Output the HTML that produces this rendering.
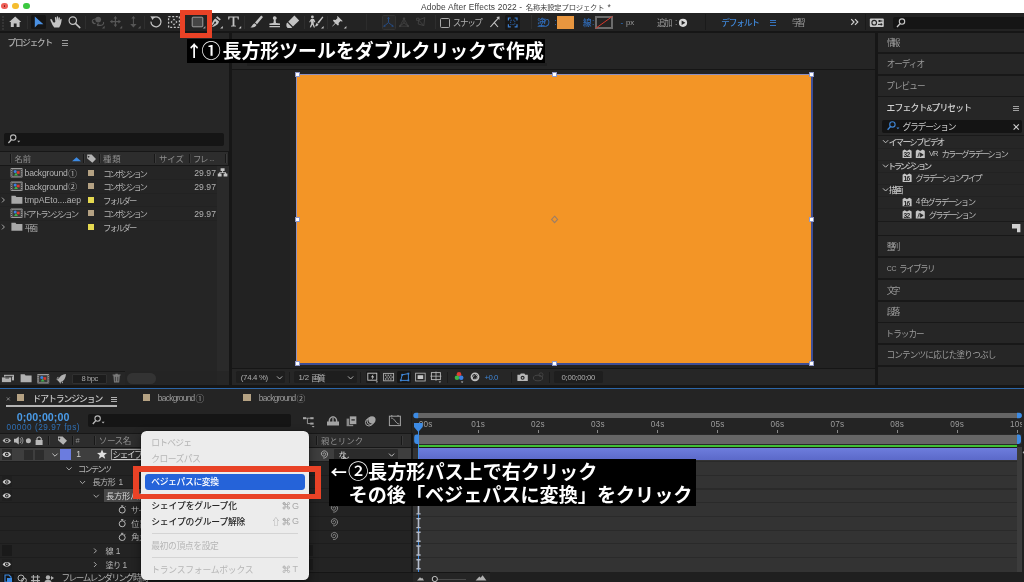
<!DOCTYPE html>
<html lang="ja"><head><meta charset="utf-8"><title>Adobe After Effects 2022</title>
<style>
html,body{margin:0;padding:0;background:#232323;}
body{width:1024px;height:582px;overflow:hidden;position:relative;font-family:"Liberation Sans",sans-serif;}
.app{position:absolute;left:0;top:0;width:1024px;height:582px;overflow:hidden;will-change:transform;}
.app>div,.app>span{position:absolute;display:block;box-sizing:border-box;white-space:nowrap;}
.ov{position:absolute;left:0;top:0;}
.ov text{font-family:"Liberation Sans","Noto Sans CJK JP",sans-serif;}
</style></head><body>
<div class="app">
<div style="left:0px;top:0px;width:1024px;height:13px;background:#ffffff;"></div>
<div style="left:1.2000000000000002px;top:2.6px;width:6.4px;height:6.4px;background:#ee5f57;border-radius:50%;"></div>
<div style="left:12.399999999999999px;top:2.6px;width:6.4px;height:6.4px;background:#f5bd2f;border-radius:50%;"></div>
<div style="left:23.2px;top:2.6px;width:6.4px;height:6.4px;background:#3bc840;border-radius:50%;"></div>
<div style="left:3.5px;top:4.9px;width:1.8px;height:1.8px;background:#7a1f18;border-radius:50%;"></div>
<span style="left:421px;top:2.6px;font-size:8.4px;line-height:8.4px;color:#3c3c3c;letter-spacing:0.139px;">Adobe After Effects 2022 -</span>
<span style="left:607.6px;top:2.5px;font-size:8.4px;line-height:8.4px;color:#3c3c3c;">*</span>
<div style="left:0px;top:13px;width:1024px;height:18px;background:#232323;"></div>
<div style="left:0px;top:31px;width:1024px;height:2px;background:#161616;"></div>
<div style="left:1.5px;top:16px;width:2px;height:1.6px;background:#343434;"></div>
<div style="left:1.5px;top:19px;width:2px;height:1.6px;background:#343434;"></div>
<div style="left:1.5px;top:22px;width:2px;height:1.6px;background:#343434;"></div>
<div style="left:1.5px;top:25px;width:2px;height:1.6px;background:#343434;"></div>
<div style="left:1.5px;top:28px;width:2px;height:1.6px;background:#343434;"></div>
<div style="left:26.5px;top:16px;width:1px;height:13px;background:#2e2e2e;"></div>
<div style="left:30.5px;top:14.5px;width:15.5px;height:14.5px;background:#151515;border-radius:1.5px;"></div>
<div style="left:85px;top:16px;width:1px;height:13px;background:#2e2e2e;"></div>
<div style="left:144px;top:16px;width:1px;height:13px;background:#2e2e2e;"></div>
<div style="left:244px;top:16px;width:1px;height:13px;background:#2e2e2e;"></div>
<div style="left:303.5px;top:16px;width:1px;height:13px;background:#2e2e2e;"></div>
<div style="left:327px;top:16px;width:1px;height:13px;background:#2e2e2e;"></div>
<div style="left:365.5px;top:14px;width:1px;height:16px;background:#2c2c2c;"></div>
<div style="left:381.5px;top:15.3px;width:14.2px;height:14.5px;background:#292929;border:1px solid #333;border-radius:1.5px;"></div>
<div style="left:435px;top:15px;width:1px;height:14px;background:#2e2e2e;"></div>
<div style="left:440.4px;top:17.6px;width:10px;height:10px;background:transparent;border:1.2px solid #a8a8a8;border-radius:1.5px;"></div>
<div style="left:505.3px;top:15px;width:15px;height:14.7px;background:#171717;border-radius:1.5px;"></div>
<div style="left:530.5px;top:15px;width:1px;height:14px;background:#2e2e2e;"></div>
<span style="left:554.2px;top:17.6px;font-size:8.4px;line-height:8.4px;color:#2f6cba;">:</span>
<div style="left:557px;top:16px;width:17px;height:12.8px;background:#e8963f;"></div>
<span style="left:592px;top:17.6px;font-size:8.4px;line-height:8.4px;color:#2f6cba;">:</span>
<div style="left:595px;top:16px;width:18px;height:12.8px;background:#232323;border:2px solid #6c6c6c;"></div>
<span style="left:620.6px;top:18.6px;font-size:8.4px;line-height:8.4px;color:#2f6cba;">-</span>
<span style="left:626px;top:19px;font-size:7.8px;line-height:7.8px;color:#9a9a9a;">px</span>
<span style="left:675px;top:17.6px;font-size:8.4px;line-height:8.4px;color:#9a9a9a;">:</span>
<div style="left:704.5px;top:14px;width:1px;height:16px;background:#1a1a1a;"></div>
<div style="left:770px;top:20px;width:6.4px;height:1.1px;background:#3673bd;"></div>
<div style="left:770px;top:22.4px;width:6.4px;height:1.1px;background:#3673bd;"></div>
<div style="left:770px;top:24.8px;width:6.4px;height:1.1px;background:#3673bd;"></div>
<div style="left:865px;top:14px;width:1px;height:16px;background:#1a1a1a;"></div>
<div style="left:893.3px;top:17px;width:131px;height:12.4px;background:#151515;border-radius:2px 0 0 2px;"></div>
<div style="left:0px;top:33px;width:229px;height:352px;background:#262626;"></div>
<div style="left:229px;top:33px;width:3px;height:352px;background:#161616;"></div>
<div style="left:62.2px;top:40.4px;width:6px;height:1px;background:#9a9a9a;"></div>
<div style="left:62.2px;top:42.6px;width:6px;height:1px;background:#9a9a9a;"></div>
<div style="left:62.2px;top:44.8px;width:6px;height:1px;background:#9a9a9a;"></div>
<div style="left:4px;top:133px;width:220px;height:13.2px;background:#151515;border-radius:2px;"></div>
<div style="left:0px;top:151px;width:229px;height:15px;background:#171717;"></div>
<div style="left:0px;top:152.4px;width:228px;height:12.4px;background:#2d2d2d;"></div>
<div style="left:10px;top:154px;width:1px;height:9.4px;background:#181818;"></div>
<div style="left:11px;top:154px;width:0.6px;height:9.4px;background:#3a3a3a;"></div>
<div style="left:83.4px;top:154px;width:1px;height:9.4px;background:#181818;"></div>
<div style="left:84.4px;top:154px;width:0.6px;height:9.4px;background:#3a3a3a;"></div>
<div style="left:99.3px;top:154px;width:1px;height:9.4px;background:#181818;"></div>
<div style="left:100.3px;top:154px;width:0.6px;height:9.4px;background:#3a3a3a;"></div>
<div style="left:154.2px;top:154px;width:1px;height:9.4px;background:#181818;"></div>
<div style="left:155.2px;top:154px;width:0.6px;height:9.4px;background:#3a3a3a;"></div>
<div style="left:189.2px;top:154px;width:1px;height:9.4px;background:#181818;"></div>
<div style="left:190.2px;top:154px;width:0.6px;height:9.4px;background:#3a3a3a;"></div>
<div style="left:225.4px;top:154px;width:1px;height:9.4px;background:#181818;"></div>
<div style="left:226.4px;top:154px;width:0.6px;height:9.4px;background:#3a3a3a;"></div>
<span style="left:209.4px;top:154.6px;font-size:7px;line-height:7px;color:#8e8e8e;letter-spacing:-0.4px;">...</span>
<div style="left:0px;top:166px;width:217px;height:205px;background:#252525;"></div>
<div style="left:217px;top:166px;width:12px;height:205px;background:#2a2a2a;"></div>
<span style="left:24.6px;top:169.2px;font-size:8.6px;line-height:8.6px;color:#b2b2b2;letter-spacing:-0.194px;">background</span>
<div style="left:88px;top:169.6px;width:6.4px;height:6.3px;background:#b5a283;"></div>
<span style="left:194.2px;top:169.2px;font-size:8.6px;line-height:8.6px;color:#b2b2b2;letter-spacing:0.070px;">29.97</span>
<div style="left:0px;top:179.0px;width:217px;height:1px;background:#222222;"></div>
<span style="left:24.6px;top:182.7px;font-size:8.6px;line-height:8.6px;color:#b2b2b2;letter-spacing:-0.194px;">background</span>
<div style="left:88px;top:183.1px;width:6.4px;height:6.3px;background:#b5a283;"></div>
<span style="left:194.2px;top:182.7px;font-size:8.6px;line-height:8.6px;color:#b2b2b2;letter-spacing:0.070px;">29.97</span>
<div style="left:0px;top:192.5px;width:217px;height:1px;background:#222222;"></div>
<span style="left:24.6px;top:196.2px;font-size:8.6px;line-height:8.6px;color:#b2b2b2;letter-spacing:-0.022px;">tmpAEto....aep</span>
<div style="left:88px;top:196.6px;width:6.4px;height:6.3px;background:#e5d950;"></div>
<div style="left:0px;top:206.0px;width:217px;height:1px;background:#222222;"></div>
<div style="left:88px;top:210.1px;width:6.4px;height:6.3px;background:#b5a283;"></div>
<span style="left:194.2px;top:209.7px;font-size:8.6px;line-height:8.6px;color:#b2b2b2;letter-spacing:0.070px;">29.97</span>
<div style="left:0px;top:219.5px;width:217px;height:1px;background:#222222;"></div>
<div style="left:88px;top:223.6px;width:6.4px;height:6.3px;background:#e5d950;"></div>
<div style="left:0px;top:371.4px;width:125px;height:1px;background:#181818;"></div>
<div style="left:0px;top:372.4px;width:229px;height:13px;background:#262626;"></div>
<div style="left:125px;top:371px;width:92px;height:14px;background:#242424;"></div>
<div style="left:72px;top:373.6px;width:35px;height:10.6px;background:#1c1c1c;border:1px solid #303030;border-radius:1px;"></div>
<span style="left:81.6px;top:375.4px;font-size:7.6px;line-height:7.6px;color:#a8a8a8;letter-spacing:-0.498px;">8 bpc</span>
<div style="left:126.6px;top:373px;width:29px;height:10.6px;background:#333333;border-radius:5.3px;"></div>
<div style="left:232px;top:33px;width:643px;height:36px;background:#252525;"></div>
<div style="left:246.6px;top:63px;width:300px;height:3.4px;background:#1f1f1f;"></div>
<div style="left:232px;top:68.6px;width:643px;height:1.4px;background:#151515;"></div>
<div style="left:232px;top:70px;width:643px;height:298px;background:#222222;"></div>
<div style="left:232px;top:367.6px;width:643px;height:1.4px;background:#161616;"></div>
<div style="left:232px;top:369px;width:643px;height:16px;background:#262626;"></div>
<div style="left:875px;top:33px;width:3px;height:352px;background:#161616;"></div>
<div style="left:296.4px;top:74.2px;width:516.6px;height:291px;background:#8d90c2;"></div>
<div style="left:298px;top:76px;width:515px;height:289.2px;background:#3f4e96;"></div>
<div style="left:297.2px;top:75px;width:513.8px;height:288.2px;background:#f39526;"></div>
<div style="left:294.79999999999995px;top:72.0px;width:5.2px;height:5.2px;background:#ffffff;border:0.8px solid #8f98c8;"></div>
<div style="left:294.79999999999995px;top:216.6px;width:5.2px;height:5.2px;background:#ffffff;border:0.8px solid #8f98c8;"></div>
<div style="left:294.79999999999995px;top:361.2px;width:5.2px;height:5.2px;background:#ffffff;border:0.8px solid #8f98c8;"></div>
<div style="left:552.0px;top:72.0px;width:5.2px;height:5.2px;background:#ffffff;border:0.8px solid #8f98c8;"></div>
<div style="left:552.0px;top:361.2px;width:5.2px;height:5.2px;background:#ffffff;border:0.8px solid #8f98c8;"></div>
<div style="left:809.0px;top:72.0px;width:5.2px;height:5.2px;background:#ffffff;border:0.8px solid #8f98c8;"></div>
<div style="left:809.0px;top:216.6px;width:5.2px;height:5.2px;background:#ffffff;border:0.8px solid #8f98c8;"></div>
<div style="left:809.0px;top:361.2px;width:5.2px;height:5.2px;background:#ffffff;border:0.8px solid #8f98c8;"></div>
<div style="left:236px;top:371.4px;width:49.4px;height:11.8px;background:#1e1e1e;border-radius:1.5px;"></div>
<span style="left:240.8px;top:373.6px;font-size:7.8px;line-height:7.8px;color:#b0b0b0;letter-spacing:-0.297px;">(74.4 %)</span>
<div style="left:289.4px;top:371.6px;width:1px;height:11.399999999999977px;background:#1b1b1b;"></div>
<div style="left:294px;top:371.4px;width:63px;height:11.8px;background:#1e1e1e;border-radius:1.5px;"></div>
<span style="left:298.4px;top:373.6px;font-size:7.8px;line-height:7.8px;color:#b0b0b0;letter-spacing:-0.122px;">1/2</span>
<div style="left:360.4px;top:371.6px;width:1px;height:11.399999999999977px;background:#1b1b1b;"></div>
<div style="left:365.6px;top:371.2px;width:14px;height:12px;background:#1a1a1a;border-radius:1.5px;"></div>
<div style="left:397px;top:371.2px;width:14.4px;height:12px;background:#161616;border-radius:1.5px;"></div>
<div style="left:447.2px;top:371.6px;width:1px;height:11.399999999999977px;background:#1b1b1b;"></div>
<span style="left:484.6px;top:373.6px;font-size:7.8px;line-height:7.8px;color:#3f86d6;letter-spacing:-0.533px;">+0.0</span>
<div style="left:510.6px;top:371.6px;width:1px;height:11.399999999999977px;background:#1b1b1b;"></div>
<div style="left:549.2px;top:371.6px;width:1px;height:11.399999999999977px;background:#1b1b1b;"></div>
<div style="left:553.8px;top:371.4px;width:49.4px;height:11.8px;background:#1e1e1e;border-radius:1.5px;"></div>
<span style="left:561.6px;top:373.6px;font-size:7.8px;line-height:7.8px;color:#b0b0b0;letter-spacing:-0.341px;">0;00;00;00</span>
<div style="left:878px;top:33px;width:146px;height:352px;background:#262626;"></div>
<div style="left:878px;top:52.4px;width:146px;height:1.6px;background:#181818;"></div>
<div style="left:878px;top:74px;width:146px;height:1.6px;background:#181818;"></div>
<div style="left:878px;top:95.8px;width:146px;height:1.6px;background:#181818;"></div>
<div style="left:1012.8px;top:105.6px;width:5.8px;height:1px;background:#a0a0a0;"></div>
<div style="left:1012.8px;top:107.8px;width:5.8px;height:1px;background:#a0a0a0;"></div>
<div style="left:1012.8px;top:110px;width:5.8px;height:1px;background:#a0a0a0;"></div>
<div style="left:882px;top:120.2px;width:139.6px;height:12.4px;background:#141414;border-radius:2px;"></div>
<div style="left:878px;top:134.6px;width:146px;height:1.2px;background:#1a1a1a;"></div>
<span style="left:929.0000000000001px;top:150.0px;font-size:7.6px;line-height:7.6px;color:#bdbdbd;letter-spacing:-0.958px;">VR</span>
<span style="left:915.8000000000001px;top:198.2px;font-size:8.2px;line-height:8.2px;color:#bdbdbd;letter-spacing:0.000px;">4</span>
<div style="left:878px;top:147.6px;width:146px;height:0.8px;background:#222222;"></div>
<div style="left:878px;top:159.8px;width:146px;height:0.8px;background:#222222;"></div>
<div style="left:878px;top:171.8px;width:146px;height:0.8px;background:#222222;"></div>
<div style="left:878px;top:183.8px;width:146px;height:0.8px;background:#222222;"></div>
<div style="left:878px;top:195.8px;width:146px;height:0.8px;background:#222222;"></div>
<div style="left:878px;top:208px;width:146px;height:0.8px;background:#222222;"></div>
<div style="left:878px;top:220.6px;width:146px;height:1px;background:#1a1a1a;"></div>
<div style="left:878px;top:221.6px;width:146px;height:13px;background:#272727;"></div>
<div style="left:878px;top:234.6px;width:146px;height:1.6px;background:#181818;"></div>
<div style="left:878px;top:256.4px;width:146px;height:1.6px;background:#181818;"></div>
<div style="left:878px;top:278.2px;width:146px;height:1.6px;background:#181818;"></div>
<div style="left:878px;top:300px;width:146px;height:1.6px;background:#181818;"></div>
<div style="left:878px;top:321.8px;width:146px;height:1.6px;background:#181818;"></div>
<div style="left:878px;top:343.4px;width:146px;height:1.6px;background:#181818;"></div>
<div style="left:878px;top:365.2px;width:146px;height:1.6px;background:#181818;"></div>
<span style="left:886.8px;top:265.3px;font-size:7px;line-height:7px;color:#9c9c9c;letter-spacing:-0.310px;">CC</span>
<div style="left:0px;top:385px;width:1024px;height:4px;background:#161616;"></div>
<div style="left:0px;top:388px;width:1024px;height:1.2px;background:#2c66a8;"></div>
<div style="left:0px;top:389.2px;width:1024px;height:193px;background:#242424;"></div>
<div style="left:17px;top:394.2px;width:7.4px;height:7px;background:#b5a283;"></div>
<div style="left:111.4px;top:396.6px;width:6px;height:1px;background:#b0b0b0;"></div>
<div style="left:111.4px;top:398.8px;width:6px;height:1px;background:#b0b0b0;"></div>
<div style="left:111.4px;top:401px;width:6px;height:1px;background:#b0b0b0;"></div>
<div style="left:6.2px;top:405.2px;width:110.6px;height:1.6px;background:#b4b4b4;"></div>
<div style="left:142.6px;top:394.2px;width:7.4px;height:7px;background:#b5a283;"></div>
<span style="left:157.8px;top:394.4px;font-size:8.4px;line-height:8.4px;color:#9a9a9a;letter-spacing:-0.700px;">background</span>
<div style="left:243.4px;top:394.2px;width:7.4px;height:7px;background:#b5a283;"></div>
<span style="left:258.8px;top:394.4px;font-size:8.4px;line-height:8.4px;color:#9a9a9a;letter-spacing:-0.700px;">background</span>
<span style="left:16.8px;top:411.5px;font-size:10.7px;line-height:10.7px;color:#4a9be8;font-weight:700;letter-spacing:0.028px;">0;00;00;00</span>
<span style="left:6.6px;top:424.4px;font-size:8.2px;line-height:8.2px;color:#2f70b5;letter-spacing:0.545px;">00000 (29.97 fps)</span>
<div style="left:88.2px;top:414px;width:203px;height:13px;background:#151515;border-radius:2px;"></div>
<div style="left:0px;top:433px;width:411px;height:1px;background:#171717;"></div>
<div style="left:0px;top:434px;width:411px;height:12.6px;background:#2d2d2d;"></div>
<div style="left:0px;top:446.6px;width:411px;height:1.2px;background:#171717;"></div>
<div style="left:47.6px;top:436px;width:1px;height:9px;background:#181818;"></div>
<div style="left:48.6px;top:436px;width:0.6px;height:9px;background:#3a3a3a;"></div>
<div style="left:71.6px;top:436px;width:1px;height:9px;background:#181818;"></div>
<div style="left:72.6px;top:436px;width:0.6px;height:9px;background:#3a3a3a;"></div>
<div style="left:94.2px;top:436px;width:1px;height:9px;background:#181818;"></div>
<div style="left:95.2px;top:436px;width:0.6px;height:9px;background:#3a3a3a;"></div>
<div style="left:316.2px;top:436px;width:1px;height:9px;background:#181818;"></div>
<div style="left:317.2px;top:436px;width:0.6px;height:9px;background:#3a3a3a;"></div>
<div style="left:400.8px;top:436px;width:1px;height:9px;background:#181818;"></div>
<div style="left:401.8px;top:436px;width:0.6px;height:9px;background:#3a3a3a;"></div>
<span style="left:75.6px;top:436.8px;font-size:7.6px;line-height:7.6px;color:#8e8e8e;">#</span>
<div style="left:0px;top:447.8px;width:411px;height:13.2px;background:#3e3e3e;"></div>
<div style="left:0px;top:461.52000000000004px;width:411px;height:13.72px;background:#232323;"></div>
<div style="left:0px;top:461.02000000000004px;width:411px;height:1px;background:#1d1d1d;"></div>
<div style="left:0px;top:475.24px;width:411px;height:13.72px;background:#232323;"></div>
<div style="left:0px;top:474.74px;width:411px;height:1px;background:#1d1d1d;"></div>
<div style="left:0px;top:488.96000000000004px;width:411px;height:13.72px;background:#232323;"></div>
<div style="left:0px;top:488.46000000000004px;width:411px;height:1px;background:#1d1d1d;"></div>
<div style="left:0px;top:502.68px;width:411px;height:13.72px;background:#232323;"></div>
<div style="left:0px;top:502.18px;width:411px;height:1px;background:#1d1d1d;"></div>
<div style="left:0px;top:516.4px;width:411px;height:13.72px;background:#232323;"></div>
<div style="left:0px;top:515.9px;width:411px;height:1px;background:#1d1d1d;"></div>
<div style="left:0px;top:530.12px;width:411px;height:13.72px;background:#232323;"></div>
<div style="left:0px;top:529.62px;width:411px;height:1px;background:#1d1d1d;"></div>
<div style="left:0px;top:543.84px;width:411px;height:13.72px;background:#232323;"></div>
<div style="left:0px;top:543.34px;width:411px;height:1px;background:#1d1d1d;"></div>
<div style="left:0px;top:557.5600000000001px;width:411px;height:13.72px;background:#232323;"></div>
<div style="left:0px;top:557.0600000000001px;width:411px;height:1px;background:#1d1d1d;"></div>
<div style="left:0px;top:447.8px;width:411px;height:13.2px;background:#3e3e3e;"></div>
<div style="left:2px;top:449px;width:9.6px;height:11px;background:#2c2c2c;"></div>
<div style="left:24px;top:449.6px;width:9px;height:10px;background:#2c2c2c;"></div>
<div style="left:34.6px;top:449.6px;width:9px;height:10px;background:#2c2c2c;"></div>
<div style="left:60.4px;top:449.4px;width:10.4px;height:10.4px;background:#6b7cdf;"></div>
<span style="left:76.2px;top:450.4px;font-size:8.6px;line-height:8.6px;color:#d0d0d0;">1</span>
<div style="left:110.6px;top:449px;width:40px;height:11px;background:#2a2a2a;border:1px solid #9a9a9a;"></div>
<div style="left:112.6px;top:459px;width:38px;height:0.8px;background:#c8c8c8;"></div>
<div style="left:2px;top:476.44px;width:9.6px;height:11px;background:#1f1f1f;"></div>
<span style="left:118.6px;top:478.24px;font-size:8.4px;line-height:8.4px;color:#b4b4b4;">1</span>
<div style="left:2px;top:490.16px;width:9.6px;height:11px;background:#1f1f1f;"></div>
<div style="left:104.2px;top:489.36px;width:60px;height:12.6px;background:#484848;"></div>
<div style="left:2px;top:545.0400000000001px;width:9.6px;height:11px;background:#1a1a1a;"></div>
<span style="left:115.8px;top:546.84px;font-size:8.4px;line-height:8.4px;color:#b4b4b4;">1</span>
<div style="left:2px;top:558.7600000000001px;width:9.6px;height:11px;background:#1f1f1f;"></div>
<span style="left:122.6px;top:560.5600000000001px;font-size:8.4px;line-height:8.4px;color:#b4b4b4;">1</span>
<div style="left:333.6px;top:448.8px;width:64.6px;height:11.6px;background:#2b2b2b;border-radius:1px;"></div>
<div style="left:308.6px;top:544.84px;width:4.6px;height:11.4px;background:#1b1b1b;"></div>
<div style="left:308.6px;top:558.5600000000001px;width:4.6px;height:11.4px;background:#1b1b1b;"></div>
<div style="left:410.6px;top:433px;width:2px;height:139px;background:#171717;"></div>
<div style="left:411.4px;top:411px;width:1px;height:22px;background:#1d1d1d;"></div>
<div style="left:412.6px;top:411px;width:611.4px;height:23.4px;background:#242424;"></div>
<div style="left:418.2px;top:412.8px;width:598.8px;height:5.4px;background:#656565;"></div>
<div style="left:417.8px;top:430.4px;width:1px;height:2.8px;background:#8a8a8a;"></div>
<span style="left:418.7px;top:420.6px;font-size:8.2px;line-height:8.2px;color:#9c9c9c;letter-spacing:0.190px;">00s</span>
<div style="left:477.68px;top:430.4px;width:1px;height:2.8px;background:#8a8a8a;"></div>
<span style="left:471.18px;top:420.6px;font-size:8.2px;line-height:8.2px;color:#9c9c9c;letter-spacing:0.190px;">01s</span>
<div style="left:537.5600000000001px;top:430.4px;width:1px;height:2.8px;background:#8a8a8a;"></div>
<span style="left:531.0600000000001px;top:420.6px;font-size:8.2px;line-height:8.2px;color:#9c9c9c;letter-spacing:0.190px;">02s</span>
<div style="left:597.44px;top:430.4px;width:1px;height:2.8px;background:#8a8a8a;"></div>
<span style="left:590.94px;top:420.6px;font-size:8.2px;line-height:8.2px;color:#9c9c9c;letter-spacing:0.190px;">03s</span>
<div style="left:657.32px;top:430.4px;width:1px;height:2.8px;background:#8a8a8a;"></div>
<span style="left:650.82px;top:420.6px;font-size:8.2px;line-height:8.2px;color:#9c9c9c;letter-spacing:0.190px;">04s</span>
<div style="left:717.2px;top:430.4px;width:1px;height:2.8px;background:#8a8a8a;"></div>
<span style="left:710.7px;top:420.6px;font-size:8.2px;line-height:8.2px;color:#9c9c9c;letter-spacing:0.190px;">05s</span>
<div style="left:777.08px;top:430.4px;width:1px;height:2.8px;background:#8a8a8a;"></div>
<span style="left:770.58px;top:420.6px;font-size:8.2px;line-height:8.2px;color:#9c9c9c;letter-spacing:0.190px;">06s</span>
<div style="left:836.96px;top:430.4px;width:1px;height:2.8px;background:#8a8a8a;"></div>
<span style="left:830.46px;top:420.6px;font-size:8.2px;line-height:8.2px;color:#9c9c9c;letter-spacing:0.190px;">07s</span>
<div style="left:896.84px;top:430.4px;width:1px;height:2.8px;background:#8a8a8a;"></div>
<span style="left:890.34px;top:420.6px;font-size:8.2px;line-height:8.2px;color:#9c9c9c;letter-spacing:0.190px;">08s</span>
<div style="left:956.72px;top:430.4px;width:1px;height:2.8px;background:#8a8a8a;"></div>
<span style="left:950.22px;top:420.6px;font-size:8.2px;line-height:8.2px;color:#9c9c9c;letter-spacing:0.190px;">09s</span>
<div style="left:1016.6000000000001px;top:430.4px;width:1px;height:2.8px;background:#8a8a8a;"></div>
<span style="left:1010.1000000000001px;top:420.6px;font-size:8.2px;line-height:8.2px;color:#9c9c9c;letter-spacing:0.190px;">10s</span>
<div style="left:412.6px;top:433.6px;width:611.4px;height:0.8px;background:#1c1c1c;"></div>
<div style="left:412.6px;top:434.4px;width:611.4px;height:10px;background:#2a2a2a;"></div>
<div style="left:418.2px;top:434.6px;width:598.8px;height:9.6px;background:#666666;"></div>
<div style="left:418.2px;top:444.2px;width:598.8px;height:0.6px;background:#2a2a2a;"></div>
<div style="left:418.2px;top:444.8px;width:598.8px;height:2.3px;background:#3fc035;"></div>
<div style="left:412.6px;top:447.4px;width:611.4px;height:1px;background:#1c1c1c;"></div>
<div style="left:412.6px;top:448.4px;width:604.4px;height:123.4px;background:#333333;"></div>
<div style="left:412.6px;top:460.92px;width:604.4px;height:1.2px;background:#2a2a2a;"></div>
<div style="left:412.6px;top:474.64px;width:604.4px;height:1.2px;background:#2a2a2a;"></div>
<div style="left:412.6px;top:488.36px;width:604.4px;height:1.2px;background:#2a2a2a;"></div>
<div style="left:412.6px;top:502.08px;width:604.4px;height:1.2px;background:#2a2a2a;"></div>
<div style="left:412.6px;top:515.8px;width:604.4px;height:1.2px;background:#2a2a2a;"></div>
<div style="left:412.6px;top:529.52px;width:604.4px;height:1.2px;background:#2a2a2a;"></div>
<div style="left:412.6px;top:543.24px;width:604.4px;height:1.2px;background:#2a2a2a;"></div>
<div style="left:412.6px;top:556.96px;width:604.4px;height:1.2px;background:#2a2a2a;"></div>
<div style="left:418.2px;top:448.4px;width:598.8px;height:12px;background:#6472d4;background:linear-gradient(#6d7ddd,#5b69c9);"></div>
<div style="left:1017px;top:447.4px;width:5px;height:124.4px;background:#3c3c3c;"></div>
<div style="left:1021.8px;top:411px;width:2.2px;height:23px;background:#242424;"></div>
<div style="left:1022px;top:434px;width:2px;height:138px;background:#202020;"></div>
<div style="left:418px;top:431px;width:1px;height:141px;background:#3d8be4;"></div>
<div style="left:0px;top:571.8px;width:1024px;height:10.2px;background:#1f1f1f;"></div>
<div style="left:412.6px;top:572px;width:77.6px;height:10px;background:#252525;"></div>
<div style="left:0px;top:571.6px;width:490px;height:1.2px;background:#151515;"></div>
<div style="left:2.6px;top:573.6px;width:11px;height:9px;background:#151515;"></div>
<div style="left:437.6px;top:578.6px;width:28.4px;height:0.8px;background:#4a4a4a;"></div>
</div>
<svg class="ov" width="1024" height="582" viewBox="0 0 1024 582">
<text x="525.8" y="9.6" font-size="7.4" fill="#404040" textLength="78.8">名称未設定プロジェクト</text>
<path d="M15.2 16.6L9.2 22L10.8 22L10.8 27L13.8 27L13.8 23.6L16.6 23.6L16.6 27L19.6 27L19.6 22L21.2 22Z" fill="#c4c4c4"/>
<path d="M34.8 16.4L34.8 27.6L38 24.2L43.4 24.2Z" fill="#4a90e2"/>
<path d="M52.6 21.2C52.2 19.6 51.6 18.8 50.6 19C50 19.4 50.6 21 51.4 22.6C52.2 24.6 53 26.2 54.2 27.4L59.2 27.4C60.4 25.8 61 24 61.4 21.6C61.7 20 61.8 19 61.2 18.8C60.5 18.7 60.2 19.6 59.9 21L59.9 17.8C59.9 16.9 58.7 16.9 58.6 17.8L58.4 20.6L58.1 16.9C58 16 56.8 16 56.8 16.9L56.8 20.6L56.2 17.5C56 16.6 54.8 16.8 54.9 17.7L55.3 21.6C55.2 22.6 54.2 22.8 53.6 22.4Z" fill="#c4c4c4"/>
<circle cx="72.8" cy="20.6" r="3.7" fill="none" stroke="#c4c4c4" stroke-width="1.2"/><path d="M75.4 23.4L79.8 27.6" stroke="#c4c4c4" stroke-width="1.5" stroke-linecap="round"/>
<circle cx="98.2" cy="19.6" r="2.9" fill="#565656"/><path d="M96 19C92 18.6 91.2 21.6 93.6 23.6M93.6 23.6L93.4 21.6M93.6 23.6L95.6 23.4M97 24.6C101 26.4 104.6 24.8 103.4 22M97 24.6L98.6 23.4M97 24.6L98.4 26" fill="none" stroke="#565656" stroke-width="1.1"/>
<path d="M104.6 28.4L104.6 25.799999999999997L102.0 28.4Z" fill="#565656"/>
<path d="M115.4 16L117.2 18.6L116 18.6L116 21L118.4 21L118.4 19.8L121 21.6L118.4 23.4L118.4 22.2L116 22.2L116 24.6L117.2 24.6L115.4 27.2L113.6 24.6L114.8 24.6L114.8 22.2L112.4 22.2L112.4 23.4L109.8 21.6L112.4 19.8L112.4 21L114.8 21L114.8 18.6L113.6 18.6Z" fill="#565656"/>
<path d="M122.2 28.4L122.2 25.799999999999997L119.60000000000001 28.4Z" fill="#565656"/>
<path d="M133.4 16L135.4 18.6L133.9 18.6L133.9 24L136.6 24L133.4 27.4L130.2 24L132.9 24L132.9 18.6L131.4 18.6Z" fill="#565656"/>
<path d="M140.6 28.4L140.6 25.799999999999997L138.0 28.4Z" fill="#565656"/>
<path d="M153.4 17.6A5 5 0 1 1 151 21.6" fill="none" stroke="#c4c4c4" stroke-width="1.3"/><path d="M150.4 16.2L154.8 16.6L152.6 20Z" fill="#c4c4c4"/>
<rect x="168.6" y="16.6" width="10.8" height="10.8" fill="none" stroke="#c4c4c4" stroke-width="1.3" stroke-dasharray="2 1.6"/><path d="M174 18.4L175.4 20.2L172.6 20.2ZM174 25.6L175.4 23.8L172.6 23.8ZM170.4 22L172.2 20.6L172.2 23.4ZM177.6 22L175.8 20.6L175.8 23.4Z" fill="#c4c4c4"/>
<rect x="192.2" y="17.2" width="10.6" height="9.6" rx="0.8" fill="#454545" stroke="#a8a8a8" stroke-width="0.9"/>
<path d="M205.4 28.6L205.4 26.0L202.8 28.6Z" fill="#9a9a9a"/>
<path d="M217.2 16.2L220.8 19.2L219.6 20.6L216 17.6ZM215.4 18.4L219 21.4C218.6 23.6 217.4 25.2 212.4 27L212.2 26.6L215 23.6A1 1 0 1 0 214.2 22.9L211.6 26L211.4 25.8C212.4 21.4 213.6 19.6 215.4 18.4Z" fill="#c4c4c4"/>
<path d="M222.8 28.6L222.8 26.0L220.20000000000002 28.6Z" fill="#c4c4c4"/>
<path d="M228.2 16.4L238.8 16.4L238.8 19.4L237.8 19.4L237.4 17.6L234.4 17.6L234.4 25.4L236 25.8L236 26.6L231 26.6L231 25.8L232.6 25.4L232.6 17.6L229.6 17.6L229.2 19.4L228.2 19.4Z" fill="#c4c4c4"/>
<path d="M241.2 28.6L241.2 26.0L238.6 28.6Z" fill="#c4c4c4"/>
<path d="M261.2 15.6L263 17L257 24.2L255 22.6ZM254.4 23.2L256.4 24.8C256 27.2 253.2 27.8 250.4 27.2C252.4 26.4 252.2 24.2 254.4 23.2Z" fill="#c4c4c4"/>
<path d="M274.8 16.2A1.9 1.9 0 0 1 275.6 19.8L276 23L280 23.4L280 25L269.4 25L269.4 23.4L273.4 23L273.9 19.8A1.9 1.9 0 0 1 274.8 16.2ZM269.4 26L280 26L280 27.2L269.4 27.2Z" fill="#c4c4c4"/>
<path d="M294.4 15.6L299.2 20.4L293 26.6L288.2 21.8ZM287.4 22.6L292.2 27.4L291.2 28L287.6 28L286.4 26.2L286.4 23.8Z" fill="#c4c4c4"/>
<circle cx="312.4" cy="17" r="1.4" fill="#c4c4c4"/><path d="M311 19L314 19L315.4 22L314.6 22.6L313.6 21L313.8 24L315 27.4L313.8 27.6L312.4 24.6L311 27.6L309.8 27.2L311.2 23.6L311 21L310 22.6L309.2 22Z" fill="#c4c4c4"/><path d="M322.4 16.4L323.4 17.2L318.8 23.4L317.4 22.4ZM316.8 23L318.4 24.2C318 26 316.4 26.4 314.8 26.2C316 25.6 315.6 23.8 316.8 23Z" fill="#c4c4c4"/>
<path d="M323.6 28.6L323.6 26.0L321.0 28.6Z" fill="#c4c4c4"/>
<path d="M337.6 16L342.8 21.2L341.6 21.6L340.6 21L338.6 23L338.8 25L337.8 25.6L335.6 23.4L332.6 26.6L332.2 26.2L335 23L333 20.8L333.6 19.8L335.6 20L337.6 18L337 17Z" fill="#c4c4c4"/>
<path d="M346.4 28.6L346.4 26.0L343.79999999999995 28.6Z" fill="#c4c4c4"/>
<path d="M388.5 22.6L388.5 18.200000000000003M388.5 22.6L384.3 26.0M388.5 22.6L392.7 26.0" stroke="#264c84" stroke-width="1" fill="none"/><path d="M388.5 16.8L390.0 18.8L387.0 18.8ZM383.3 27.0L385.7 26.400000000000002L384.1 24.6ZM393.7 27.0L391.3 26.400000000000002L392.9 24.6Z" fill="#264c84"/>
<path d="M404 22.8L404 18.4M404 22.8L399.8 26.2M404 22.8L408.2 26.2" stroke="#434343" stroke-width="1" fill="none"/><path d="M404 17.0L405.5 19.0L402.5 19.0ZM398.8 27.200000000000003L401.2 26.6L399.6 24.8ZM409.2 27.200000000000003L406.8 26.6L408.4 24.8Z" fill="#434343"/>
<path d="M404 18.4L399.8 26.2L408.2 26.2Z" stroke="#434343" stroke-width="0.8" fill="none"/>
<path d="M416.6 18.2L419 18.2L419 20.4L416.6 20.4ZM418.6 20L424.8 17.6L423.8 25.6L418.2 24Z M418.6 20L423.8 25.6" stroke="#444" stroke-width="0.9" fill="none"/>
<text x="452.8" y="26" font-size="8.6" fill="#b0b0b0" textLength="30.1">スナップ</text>
<path d="M490.4 27L494.2 22.6L498 27M494.2 22.6L498.6 17.8" stroke="#c4c4c4" stroke-width="1.1" fill="none"/><path d="M499.6 16.6L499.4 20L496.4 17Z" fill="#c4c4c4"/>
<path d="M508.4 20.4L508.4 18L510.8 18M514.6 18L517 18L517 20.4M517 24.2L517 26.8L514.6 26.8M510.8 26.8L508.4 26.8L508.4 24.2" stroke="#3b7ed2" stroke-width="1.2" fill="none"/><rect x="510.6" y="20.2" width="4.2" height="4.4" fill="none" stroke="#2a5b9b" stroke-width="1" stroke-dasharray="1.4 1"/>
<text x="537.2" y="26" font-size="8.6" font-weight="500" fill="#2f6cba" textLength="13.8">塗り</text>
<text x="583" y="26" font-size="8.6" font-weight="500" fill="#2f6cba">線</text>
<path d="M595.6 28.4L612.4 16.4" stroke="#d8382c" stroke-width="1"/>
<text x="657" y="26" font-size="8.6" fill="#9a9a9a" textLength="15.6">追加</text>
<circle cx="683" cy="22.8" r="4.1" fill="#d8d8d8"/><path d="M681.6 20.6L685.4 22.8L681.6 25Z" fill="#232323"/>
<text x="721.3" y="26" font-size="8.6" font-weight="500" fill="#3f86d6" textLength="38.5">デフォルト</text>
<text x="792" y="26" font-size="8.6" fill="#9a9a9a" textLength="13.6">学習</text>
<path d="M851.2 19.2L854 22L851.2 24.8M855 19.2L857.8 22L855 24.8" stroke="#cfcfcf" stroke-width="1.2" fill="none"/>
<rect x="869.8" y="18.4" width="14" height="8.6" rx="1" fill="#c8c8c8"/><circle cx="874.2" cy="22.7" r="2.3" fill="none" stroke="#232323" stroke-width="1.1"/><path d="M878 21L882.4 21M878 24.4L882.4 24.4" stroke="#232323" stroke-width="1"/><rect x="879" y="20" width="1.4" height="2" fill="#232323"/><rect x="880.6" y="23.4" width="1.4" height="2" fill="#232323"/>
<circle cx="902" cy="21.6" r="2.7" fill="none" stroke="#c8c8c8" stroke-width="1.1"/><path d="M900 23.8L897 27" stroke="#c8c8c8" stroke-width="1.3"/>
<text x="7.5" y="45.6" font-size="8.6" font-weight="500" fill="#b0b0b0" textLength="45.6">プロジェクト</text>
<circle cx="13.2" cy="137.6" r="2.7" fill="none" stroke="#b8b8b8" stroke-width="1.1"/><path d="M11.299999999999999 139.7L8.399999999999999 143.0" stroke="#b8b8b8" stroke-width="1.3"/>
<path d="M17.2 140.79999999999998L20.2 140.79999999999998L18.7 142.5Z" fill="#b8b8b8"/>
<text x="14.6" y="162" font-size="8.4" fill="#8e8e8e" textLength="16.4">名前</text>
<path d="M72 161.2L76.5 157.2L81 161.2Z" fill="#3d8be4"/>
<path d="M87.2 154.6L91.6 154.6L96 159L92.4 162.8L87.2 158.4ZM88.6 155.9A0.8 0.8 0 1 0 88.7 155.9Z" fill="#b4b4b4" fill-rule="evenodd"/>
<text x="103" y="162" font-size="8.4" fill="#8e8e8e" textLength="17.6">種類</text>
<text x="159" y="162" font-size="8.4" fill="#8e8e8e" textLength="24.8">サイズ</text>
<text x="193" y="162" font-size="8.4" fill="#8e8e8e" textLength="15.4">フレ</text>
<rect x="10.6" y="168.0" width="12" height="9.6" rx="0.8" fill="#9c9c9c"/><rect x="12.299999999999999" y="169.2" width="8.6" height="7.2" fill="#3a3a3a"/><circle cx="15.2" cy="171.6" r="1.5" fill="#3b7fe0"/><rect x="16.8" y="171.2" width="2.8" height="2.6" fill="#d8372c"/><path d="M14.0 175.6L16.0 172.8L18.0 175.6Z" fill="#3db54a"/><rect x="11.0" y="169.0" width="0.9" height="1.1" fill="#333"/><rect x="21.299999999999997" y="169.0" width="0.9" height="1.1" fill="#333"/><rect x="11.0" y="171.2" width="0.9" height="1.1" fill="#333"/><rect x="21.299999999999997" y="171.2" width="0.9" height="1.1" fill="#333"/><rect x="11.0" y="173.4" width="0.9" height="1.1" fill="#333"/><rect x="21.299999999999997" y="173.4" width="0.9" height="1.1" fill="#333"/><rect x="11.0" y="175.6" width="0.9" height="1.1" fill="#333"/><rect x="21.299999999999997" y="175.6" width="0.9" height="1.1" fill="#333"/>
<text x="68.2" y="176.6" font-size="8.8" fill="#b2b2b2">①</text>
<text x="103.2" y="176.6" font-size="8.4" fill="#b2b2b2" textLength="44.7">コンポジション</text>
<rect x="10.6" y="181.5" width="12" height="9.6" rx="0.8" fill="#9c9c9c"/><rect x="12.299999999999999" y="182.7" width="8.6" height="7.2" fill="#3a3a3a"/><circle cx="15.2" cy="185.1" r="1.5" fill="#3b7fe0"/><rect x="16.8" y="184.7" width="2.8" height="2.6" fill="#d8372c"/><path d="M14.0 189.1L16.0 186.3L18.0 189.1Z" fill="#3db54a"/><rect x="11.0" y="182.5" width="0.9" height="1.1" fill="#333"/><rect x="21.299999999999997" y="182.5" width="0.9" height="1.1" fill="#333"/><rect x="11.0" y="184.7" width="0.9" height="1.1" fill="#333"/><rect x="21.299999999999997" y="184.7" width="0.9" height="1.1" fill="#333"/><rect x="11.0" y="186.9" width="0.9" height="1.1" fill="#333"/><rect x="21.299999999999997" y="186.9" width="0.9" height="1.1" fill="#333"/><rect x="11.0" y="189.1" width="0.9" height="1.1" fill="#333"/><rect x="21.299999999999997" y="189.1" width="0.9" height="1.1" fill="#333"/>
<text x="68.2" y="190.1" font-size="8.8" fill="#b2b2b2">②</text>
<text x="103.2" y="190.1" font-size="8.4" fill="#b2b2b2" textLength="44.7">コンポジション</text>
<path d="M2 197.6L4.4 200.0L2 202.4" stroke="#a8a8a8" stroke-width="1" fill="none"/>
<path d="M11.4 195.79999999999998L15.4 195.79999999999998L16.4 197.0L22.4 197.0L22.4 203.79999999999998L11.4 203.79999999999998Z" fill="#a8a8a8"/>
<text x="103" y="203.6" font-size="8.4" fill="#b2b2b2" textLength="34.4">フォルダー</text>
<rect x="10.6" y="208.5" width="12" height="9.6" rx="0.8" fill="#9c9c9c"/><rect x="12.299999999999999" y="209.7" width="8.6" height="7.2" fill="#3a3a3a"/><circle cx="15.2" cy="212.1" r="1.5" fill="#3b7fe0"/><rect x="16.8" y="211.7" width="2.8" height="2.6" fill="#d8372c"/><path d="M14.0 216.1L16.0 213.3L18.0 216.1Z" fill="#3db54a"/><rect x="11.0" y="209.5" width="0.9" height="1.1" fill="#333"/><rect x="21.299999999999997" y="209.5" width="0.9" height="1.1" fill="#333"/><rect x="11.0" y="211.7" width="0.9" height="1.1" fill="#333"/><rect x="21.299999999999997" y="211.7" width="0.9" height="1.1" fill="#333"/><rect x="11.0" y="213.9" width="0.9" height="1.1" fill="#333"/><rect x="21.299999999999997" y="213.9" width="0.9" height="1.1" fill="#333"/><rect x="11.0" y="216.1" width="0.9" height="1.1" fill="#333"/><rect x="21.299999999999997" y="216.1" width="0.9" height="1.1" fill="#333"/>
<text x="22" y="217.1" font-size="8.4" fill="#b2b2b2" textLength="57">ドアトランジション</text>
<text x="103.2" y="217.1" font-size="8.4" fill="#b2b2b2" textLength="44.7">コンポジション</text>
<path d="M2 224.6L4.4 227.0L2 229.4" stroke="#a8a8a8" stroke-width="1" fill="none"/>
<path d="M11.4 222.79999999999998L15.4 222.79999999999998L16.4 224.0L22.4 224.0L22.4 230.79999999999998L11.4 230.79999999999998Z" fill="#a8a8a8"/>
<text x="24.6" y="230.6" font-size="8.4" fill="#b2b2b2" textLength="13.6">平面</text>
<text x="103" y="230.6" font-size="8.4" fill="#b2b2b2" textLength="34.4">フォルダー</text>
<path d="M220.6 168.2L224.6 168.2L224.6 171L223.1 171L223.1 172.2L226 172.2L226 173.6L227.4 173.6L227.4 176.6L223.6 176.6L223.6 173.6L225 173.6L225 173.1L220.2 173.1L220.2 173.6L221.6 173.6L221.6 176.6L217.8 176.6L217.8 173.6L219.2 173.6L219.2 172.2L222.1 172.2L222.1 171L220.6 171Z" fill="#c4c4c4"/>
<rect x="4" y="374.8" width="10" height="5.6" fill="#b0b0b0"/><rect x="1.6" y="377" width="10" height="5.6" fill="#b0b0b0" stroke="#262626" stroke-width="0.8"/><path d="M5.4 376.4L12.6 376.4M5.4 378L9 378" stroke="#333" stroke-width="0.9"/>
<path d="M20.6 374.20000000000005L24.6 374.20000000000005L25.6 375.40000000000003L31.6 375.40000000000003L31.6 382.20000000000005L20.6 382.20000000000005Z" fill="#b0b0b0"/>
<rect x="37.2" y="374" width="12" height="9.6" rx="0.8" fill="#9c9c9c"/><rect x="38.900000000000006" y="375.2" width="8.6" height="7.2" fill="#3a3a3a"/><circle cx="41.800000000000004" cy="377.6" r="1.5" fill="#3b7fe0"/><rect x="43.400000000000006" y="377.2" width="2.8" height="2.6" fill="#d8372c"/><path d="M40.6 381.6L42.6 378.8L44.6 381.6Z" fill="#3db54a"/><rect x="37.6" y="375.0" width="0.9" height="1.1" fill="#333"/><rect x="47.900000000000006" y="375.0" width="0.9" height="1.1" fill="#333"/><rect x="37.6" y="377.2" width="0.9" height="1.1" fill="#333"/><rect x="47.900000000000006" y="377.2" width="0.9" height="1.1" fill="#333"/><rect x="37.6" y="379.4" width="0.9" height="1.1" fill="#333"/><rect x="47.900000000000006" y="379.4" width="0.9" height="1.1" fill="#333"/><rect x="37.6" y="381.6" width="0.9" height="1.1" fill="#333"/><rect x="47.900000000000006" y="381.6" width="0.9" height="1.1" fill="#333"/>
<path d="M66 374C62.4 374.2 59.6 376.4 58.4 379L56.2 379.4L57.8 380.6L59.6 382.6L60.2 384L61 382C63.8 381 65.8 378 66 374ZM58.2 376.8L56.4 378.6L58.6 378.4ZM63 381.4L62.8 383.6L61.6 382.2Z" fill="#b0b0b0"/>
<path d="M113.4 375.6L119.8 375.6L119.2 382.6L114 382.6ZM112.6 374.6L120.6 374.6L120.6 375.4L112.6 375.4ZM115.4 373.8L117.8 373.8L117.8 374.6L115.4 374.6Z" fill="#7a7a7a"/><path d="M115.4 376.8L115.4 381.4M117.8 376.8L117.8 381.4" stroke="#262626" stroke-width="0.7"/>
<path d="M554.6 216.2L557.6 219.4L554.6 222.6L551.6 219.4Z" fill="none" stroke="#9c7e66" stroke-width="1.1"/>
<path d="M277.0 376.40000000000003L279.6 379.0L282.20000000000005 376.40000000000003" stroke="#b0b0b0" stroke-width="1" fill="none"/>
<text x="311.4" y="380.6" font-size="8.2" fill="#b0b0b0" textLength="14.4">画質</text>
<path d="M348.0 376.40000000000003L350.6 379.0L353.20000000000005 376.40000000000003" stroke="#b0b0b0" stroke-width="1" fill="none"/>
<rect x="367.8" y="373.2" width="9" height="7" fill="none" stroke="#c8c8c8" stroke-width="0.9"/><path d="M373.4 374L371 377.2L372.6 377.2L371.6 380L374.2 376.4L372.6 376.4Z" fill="#e0e0e0"/><path d="M375.6 381.4L378.2 381.4L376.9 382.8Z" fill="#c8c8c8"/>
<rect x="383.6" y="373.4" width="10" height="7.4" fill="none" stroke="#b0b0b0" stroke-width="0.9"/><rect x="385.0" y="374.6" width="1.3" height="1.5" fill="#9a9a9a"/><rect x="387.6" y="374.6" width="1.3" height="1.5" fill="#9a9a9a"/><rect x="390.2" y="374.6" width="1.3" height="1.5" fill="#9a9a9a"/><rect x="386.3" y="376.4" width="1.3" height="1.5" fill="#9a9a9a"/><rect x="388.9" y="376.4" width="1.3" height="1.5" fill="#9a9a9a"/><rect x="391.5" y="376.4" width="1.3" height="1.5" fill="#9a9a9a"/><rect x="385.0" y="378.2" width="1.3" height="1.5" fill="#9a9a9a"/><rect x="387.6" y="378.2" width="1.3" height="1.5" fill="#9a9a9a"/><rect x="390.2" y="378.2" width="1.3" height="1.5" fill="#9a9a9a"/>
<path d="M400.8 380.4L402.2 374.8L408.4 373.6L408.4 380.4Z" fill="none" stroke="#3f86d6" stroke-width="1"/><rect x="399.90000000000003" y="379.5" width="1.8" height="1.8" fill="#3f86d6"/><rect x="401.3" y="373.90000000000003" width="1.8" height="1.8" fill="#3f86d6"/><rect x="407.5" y="372.70000000000005" width="1.8" height="1.8" fill="#3f86d6"/><rect x="407.5" y="379.5" width="1.8" height="1.8" fill="#3f86d6"/>
<rect x="415.6" y="373.2" width="9.6" height="7.8" fill="none" stroke="#b0b0b0" stroke-width="0.9"/><rect x="417.6" y="375.2" width="5.6" height="3.8" fill="#c8c8c8"/>
<rect x="431.4" y="372.6" width="9" height="7" fill="none" stroke="#b8b8b8" stroke-width="0.9"/><path d="M436 371.6L436 380.8M430.4 376.2L441.4 376.2" stroke="#b8b8b8" stroke-width="0.8"/><path d="M438.6 381.4L441.2 381.4L439.9 382.8Z" fill="#c8c8c8"/>
<circle cx="459" cy="374.2" r="2.3" fill="#e03c31"/><circle cx="457" cy="377.8" r="2.3" fill="#3db54a"/><circle cx="461.2" cy="377.8" r="2.3" fill="#3b7fe0"/><path d="M460.8 381.6L463.4 381.6L462.1 383Z" fill="#c8c8c8"/>
<circle cx="475" cy="376.8" r="3.6" fill="none" stroke="#c0c0c0" stroke-width="1.6"/><path d="M475 373.6L477 376.2M478 375.6L476.6 378.6M477.2 379.4L474 379.2M473 380L472.2 377M472 378L474.4 375" stroke="#c0c0c0" stroke-width="0.8"/>
<path d="M517.4 374.8L520 374.8L520.8 373.6L524.4 373.6L525.2 374.8L527.8 374.8L527.8 381L517.4 381Z" fill="#b8b8b8"/><circle cx="522.6" cy="377.8" r="2" fill="#262626"/><circle cx="522.6" cy="377.8" r="0.9" fill="#b8b8b8"/>
<ellipse cx="538" cy="378" rx="4.6" ry="2.8" fill="none" stroke="#444" stroke-width="1"/><circle cx="541" cy="374.8" r="2" fill="none" stroke="#444" stroke-width="0.9"/>
<text x="886.8" y="45.8" font-size="8.6" fill="#9c9c9c" textLength="13.6">情報</text>
<text x="886.7" y="67.4" font-size="8.6" fill="#9c9c9c" textLength="38.3">オーディオ</text>
<text x="886.3" y="89" font-size="8.6" fill="#9c9c9c" textLength="39.2">プレビュー</text>
<text x="886.6" y="110.6" font-size="8.8" font-weight="500" fill="#d2d2d2" textLength="85.5">エフェクト&amp;プリセット</text>
<circle cx="892.4" cy="124.4" r="2.7" fill="none" stroke="#3f86d6" stroke-width="1.1"/><path d="M890.5 126.5L887.6 129.8" stroke="#3f86d6" stroke-width="1.3"/>
<path d="M896.4 127.60000000000001L899.4 127.60000000000001L897.9 129.3Z" fill="#3f86d6"/>
<text x="902.4" y="130.4" font-size="8.8" fill="#c8c8c8" textLength="54.2">グラデーション</text>
<path d="M1013.6 124.4L1018.8 129.6M1018.8 124.4L1013.6 129.6" stroke="#d0d0d0" stroke-width="1.1"/>
<path d="M883.0 140.20000000000002L885.6 142.8L888.2 140.20000000000002" stroke="#c0c0c0" stroke-width="1" fill="none"/>
<text x="888.7" y="144.8" font-size="8.4" font-weight="500" fill="#c0c0c0" textLength="56.5">イマーシブビデオ</text>
<path d="M902.6 150.8L904.6 149.60000000000002L907.0 151.00000000000003L909.4 149.60000000000002L911.6 150.8L911.6 158.00000000000003L902.6 158.00000000000003Z" fill="#c4c4c4"/>
<text x="903.6" y="157.3" font-size="6.6" font-weight="700" fill="#222" textLength="6.6">32</text>
<path d="M915.8000000000001 150.8L917.8000000000001 149.60000000000002L920.2 151.00000000000003L922.6 149.60000000000002L924.8000000000001 150.8L924.8000000000001 158.00000000000003L915.8000000000001 158.00000000000003Z" fill="#c4c4c4"/>
<path d="M917.8000000000001 157.00000000000003L919.4000000000001 152.40000000000003M920.2 153.00000000000003L923.2 154.8L920.2 156.60000000000002Z" stroke="#222" stroke-width="0.8" fill="#222"/>
<text x="941.5" y="157" font-size="8.4" fill="#bdbdbd" textLength="67.4">カラーグラデーション</text>
<path d="M883.0 164.60000000000002L885.6 167.20000000000002L888.2 164.60000000000002" stroke="#c0c0c0" stroke-width="1" fill="none"/>
<text x="887.7" y="169.2" font-size="8.4" font-weight="500" fill="#c0c0c0" textLength="44.5">トランジション</text>
<path d="M902.6 174.8L904.6 173.60000000000002L907.0 175.00000000000003L909.4 173.60000000000002L911.6 174.8L911.6 182.00000000000003L902.6 182.00000000000003Z" fill="#c4c4c4"/>
<text x="903.6" y="181.3" font-size="6.6" font-weight="700" fill="#222" textLength="6.6">16</text>
<text x="915.6" y="181" font-size="8.4" fill="#bdbdbd" textLength="67">グラデーションワイプ</text>
<path d="M883.0 188.40000000000003L885.6 191.00000000000003L888.2 188.40000000000003" stroke="#c0c0c0" stroke-width="1" fill="none"/>
<text x="889" y="193" font-size="8.4" font-weight="500" fill="#c0c0c0" textLength="14.4">描画</text>
<path d="M902.6 199.0L904.6 197.8L907.0 199.20000000000002L909.4 197.8L911.6 199.0L911.6 206.20000000000002L902.6 206.20000000000002Z" fill="#c4c4c4"/>
<text x="903.6" y="205.5" font-size="6.6" font-weight="700" fill="#222" textLength="6.6">16</text>
<text x="920.4" y="205.2" font-size="8.4" fill="#bdbdbd" textLength="55.6">色グラデーション</text>
<path d="M902.6 211.4L904.6 210.20000000000002L907.0 211.60000000000002L909.4 210.20000000000002L911.6 211.4L911.6 218.60000000000002L902.6 218.60000000000002Z" fill="#c4c4c4"/>
<text x="903.6" y="217.9" font-size="6.6" font-weight="700" fill="#222" textLength="6.6">32</text>
<path d="M915.8000000000001 211.4L917.8000000000001 210.20000000000002L920.2 211.60000000000002L922.6 210.20000000000002L924.8000000000001 211.4L924.8000000000001 218.60000000000002L915.8000000000001 218.60000000000002Z" fill="#c4c4c4"/>
<path d="M917.8000000000001 217.60000000000002L919.4000000000001 213.00000000000003M920.2 213.60000000000002L923.2 215.4L920.2 217.20000000000002Z" stroke="#222" stroke-width="0.8" fill="#222"/>
<text x="928.8" y="217.6" font-size="8.4" fill="#bdbdbd" textLength="47.6">グラデーション</text>
<path d="M1012 224L1020.4 224L1020.4 232.2L1017 232.2L1017 228.4L1012 228.4Z" fill="#d0d0d0"/>
<text x="886.8" y="250.2" font-size="8.6" fill="#9c9c9c" textLength="13.6">整列</text>
<text x="899" y="272" font-size="8.6" fill="#9c9c9c" textLength="36.7">ライブラリ</text>
<text x="886.8" y="293.6" font-size="8.6" fill="#9c9c9c" textLength="13.6">文字</text>
<text x="886.8" y="315.4" font-size="8.6" fill="#9c9c9c" textLength="13.6">段落</text>
<text x="885.5" y="336.8" font-size="8.6" fill="#9c9c9c" textLength="39.2">トラッカー</text>
<text x="886.4" y="358.4" font-size="8.6" fill="#9c9c9c" textLength="110">コンテンツに応じた塗りつぶし</text>
<path d="M6.8 397.4L9.8 400.4M9.8 397.4L6.8 400.4" stroke="#8a8a8a" stroke-width="0.9"/>
<text x="32.4" y="401.6" font-size="8.8" font-weight="500" fill="#c8c8c8" textLength="71">ドアトランジション</text>
<text x="195.6" y="401.8" font-size="8.8" fill="#9a9a9a">①</text>
<text x="296.6" y="401.8" font-size="8.8" fill="#9a9a9a">②</text>
<circle cx="97.6" cy="418.6" r="2.7" fill="none" stroke="#b8b8b8" stroke-width="1.1"/><path d="M95.69999999999999 420.70000000000005L92.8 424.0" stroke="#b8b8b8" stroke-width="1.3"/>
<path d="M101.6 421.8L104.6 421.8L103.1 423.5Z" fill="#b8b8b8"/>
<path d="M303 418.2L307.4 418.2M307.4 418.2L307.4 423.6L310.6 423.6M307.4 418.2L310.6 418.2" stroke="#a4a4a4" stroke-width="0.9" fill="none"/><rect x="303" y="417.2" width="3" height="2" fill="#a4a4a4"/><rect x="310.2" y="417.2" width="3.4" height="2" fill="#a4a4a4"/><rect x="310.2" y="422.6" width="3.4" height="2" fill="#a4a4a4"/><path d="M311.6 426L314.6 426L313.1 427.6Z" fill="#a4a4a4"/>
<path d="M327 421.6L339 421.6L339 425.4L327 425.4ZM328.6 421.6C328.6 417.6 331 416.2 333 416.2C335 416.2 337.4 417.6 337.4 421.6L336 421.6C336 418.6 334.6 417.6 333 417.6C331.4 417.6 330 418.6 330 421.6Z" fill="#a4a4a4"/><rect x="332.4" y="417.6" width="1.2" height="6" fill="#a4a4a4"/>
<rect x="346.6" y="418.6" width="6.6" height="7.6" fill="#8a8a8a"/><rect x="349.4" y="416" width="7.4" height="8.4" fill="#a4a4a4" stroke="#242424" stroke-width="0.7"/><rect x="351.4" y="419.2" width="3.4" height="1.4" fill="#333"/>
<circle cx="369" cy="422.4" r="3.6" fill="none" stroke="#a4a4a4" stroke-width="1"/><circle cx="370.6" cy="421" r="3.6" fill="none" stroke="#a4a4a4" stroke-width="1"/><circle cx="372" cy="419.8" r="3.6" fill="#a4a4a4"/>
<rect x="389.4" y="416.2" width="11" height="9.4" fill="none" stroke="#a4a4a4" stroke-width="1"/><path d="M391 418C395 418 395.4 424 399.4 424" stroke="#a4a4a4" stroke-width="0.9" fill="none"/><path d="M391.8 415L391.8 416.2M398 415L398 416.2" stroke="#a4a4a4" stroke-width="1"/>
<path d="M2.5999999999999996 440.6C4.4 437.3 9.2 437.3 11.0 440.6C9.2 443.90000000000003 4.4 443.90000000000003 2.5999999999999996 440.6Z" fill="#b8b8b8"/><circle cx="6.8" cy="440.6" r="1.8" fill="#222"/><circle cx="6.8" cy="440.6" r="0.75" fill="#b8b8b8"/>
<path d="M14 438.8L16 438.8L18.8 436.6L18.8 444.6L16 442.4L14 442.4Z" fill="#b8b8b8"/><path d="M20 438.2C21.4 439.6 21.4 441.6 20 443M21.4 437C23.4 439 23.4 442.2 21.4 444.2" stroke="#b8b8b8" stroke-width="0.8" fill="none"/>
<circle cx="28.4" cy="440.8" r="2.5" fill="#b8b8b8"/>
<rect x="35.6" y="440" width="7" height="5" fill="#b8b8b8"/><path d="M37 440L37 438.4A2.3 2.3 0 0 1 41.2 438.4L41.2 440" stroke="#b8b8b8" stroke-width="1.1" fill="none"/>
<path d="M58 436.4L62.6 436.4L67 440.8L63.2 444.8L58 440.2ZM59.4 437.8A0.8 0.8 0 1 0 59.5 437.8Z" fill="#b4b4b4" fill-rule="evenodd"/>
<text x="98.8" y="444" font-size="8.6" fill="#8e8e8e" textLength="32.5">ソース名</text>
<text x="321" y="444" font-size="8.4" fill="#8e8e8e" textLength="42">親とリンク</text>
<path d="M2.5999999999999996 454.4C4.4 451.09999999999997 9.2 451.09999999999997 11.0 454.4C9.2 457.7 4.4 457.7 2.5999999999999996 454.4Z" fill="#cccccc"/><circle cx="6.8" cy="454.4" r="1.8" fill="#222"/><circle cx="6.8" cy="454.4" r="0.75" fill="#cccccc"/>
<path d="M2.5999999999999996 454.4C4.4 451.09999999999997 9.2 451.09999999999997 11.0 454.4C9.2 457.7 4.4 457.7 2.5999999999999996 454.4Z" fill="#cccccc"/><circle cx="6.8" cy="454.4" r="1.8" fill="#222"/><circle cx="6.8" cy="454.4" r="0.75" fill="#cccccc"/>
<path d="M52.4 453.6L55 456.2L57.6 453.6" stroke="#c0c0c0" stroke-width="1" fill="none"/>
<path d="M102 449.4L103.4 452.8L107 453L104.2 455.2L105.2 458.8L102 456.8L98.8 458.8L99.8 455.2L97 453L100.6 452.8Z" fill="#e0e0e0"/>
<text x="112.5" y="458" font-size="8.6" fill="#d8d8d8" textLength="58.9">シェイプレイヤー</text>
<path d="M66.4 467.32000000000005L69 469.92L71.6 467.32000000000005" stroke="#a8a8a8" stroke-width="1" fill="none"/>
<text x="78" y="471.72" font-size="8.2" fill="#b4b4b4" textLength="34">コンテンツ</text>
<path d="M2.5999999999999996 482.04C4.4 478.74 9.2 478.74 11.0 482.04C9.2 485.34000000000003 4.4 485.34000000000003 2.5999999999999996 482.04Z" fill="#cccccc"/><circle cx="6.8" cy="482.04" r="1.8" fill="#222"/><circle cx="6.8" cy="482.04" r="0.75" fill="#cccccc"/>
<path d="M79.9 481.04L82.5 483.64L85.1 481.04" stroke="#a8a8a8" stroke-width="1" fill="none"/>
<text x="92.6" y="485.44" font-size="8.2" fill="#b4b4b4" textLength="23.1">長方形</text>
<path d="M2.5999999999999996 495.76000000000005C4.4 492.46000000000004 9.2 492.46000000000004 11.0 495.76000000000005C9.2 499.06000000000006 4.4 499.06000000000006 2.5999999999999996 495.76000000000005Z" fill="#cccccc"/><circle cx="6.8" cy="495.76000000000005" r="1.8" fill="#222"/><circle cx="6.8" cy="495.76000000000005" r="0.75" fill="#cccccc"/>
<path d="M93.60000000000001 494.76000000000005L96.2 497.36L98.8 494.76000000000005" stroke="#a8a8a8" stroke-width="1" fill="none"/>
<text x="106" y="499.16" font-size="8.2" fill="#d8d8d8" textLength="47">長方形パス 1</text>
<circle cx="122.2" cy="510.08000000000004" r="3" fill="none" stroke="#b8b8b8" stroke-width="1"/><path d="M121.0 505.88L123.4 505.88M122.2 505.88L122.2 507.08000000000004M124.60000000000001 507.28000000000003L125.4 506.48" stroke="#b8b8b8" stroke-width="0.9"/>
<text x="131" y="512.88" font-size="8.2" fill="#b4b4b4" textLength="22.3">サイズ</text>
<circle cx="122.2" cy="523.8" r="3" fill="none" stroke="#b8b8b8" stroke-width="1"/><path d="M121.0 519.5999999999999L123.4 519.5999999999999M122.2 519.5999999999999L122.2 520.8M124.60000000000001 520.9999999999999L125.4 520.1999999999999" stroke="#b8b8b8" stroke-width="0.9"/>
<text x="131.2" y="526.6" font-size="8.2" fill="#b4b4b4" textLength="16.4">位置</text>
<circle cx="122.2" cy="537.52" r="3" fill="none" stroke="#b8b8b8" stroke-width="1"/><path d="M121.0 533.3199999999999L123.4 533.3199999999999M122.2 533.3199999999999L122.2 534.52M124.60000000000001 534.7199999999999L125.4 533.92" stroke="#b8b8b8" stroke-width="0.9"/>
<text x="131.2" y="540.32" font-size="8.2" fill="#b4b4b4" textLength="40.6">角丸の半径</text>
<path d="M94 548.44L96.4 550.84L94 553.24" stroke="#a8a8a8" stroke-width="1" fill="none"/>
<text x="105.4" y="554.04" font-size="8.2" fill="#b4b4b4">線</text>
<path d="M2.5999999999999996 564.36C4.4 561.0600000000001 9.2 561.0600000000001 11.0 564.36C9.2 567.66 4.4 567.66 2.5999999999999996 564.36Z" fill="#cccccc"/><circle cx="6.8" cy="564.36" r="1.8" fill="#222"/><circle cx="6.8" cy="564.36" r="0.75" fill="#cccccc"/>
<path d="M94 562.1600000000001L96.4 564.5600000000001L94 566.96" stroke="#a8a8a8" stroke-width="1" fill="none"/>
<text x="105.4" y="567.76" font-size="8.2" fill="#b4b4b4" textLength="15.8">塗り</text>
<path d="M323.64 454.33L323.45 454.23L323.30 454.03L323.23 453.75L323.28 453.44L323.46 453.13L323.77 452.90L324.18 452.78L324.64 452.82L325.08 453.04L325.45 453.44L325.66 453.97L325.67 454.57L325.45 455.18L325.01 455.70L324.39 456.05L323.64 456.16L322.87 456.00L322.17 455.56L321.65 454.87L321.39 454.01L321.44 453.07L321.84 452.18L322.54 451.45L323.49 451.00L324.57 450.91L325.65 451.20L326.60 451.87L327.27 452.86L327.57 454.06L327.43 455.32L326.85 456.49L325.87 457.41L324.60 457.95L323.18 458.02" stroke="#b8b8b8" stroke-width="0.85" fill="none"/>
<text x="338.6" y="458" font-size="8.4" fill="#d0d0d0" textLength="11.3">なし</text>
<path d="M389.0 453.6L391.6 456.2L394.20000000000005 453.6" stroke="#c0c0c0" stroke-width="1" fill="none"/>
<path d="M333.64 508.41L333.45 508.31L333.30 508.11L333.23 507.83L333.28 507.52L333.46 507.21L333.77 506.98L334.18 506.86L334.64 506.90L335.08 507.12L335.45 507.52L335.66 508.05L335.67 508.65L335.45 509.26L335.01 509.78L334.39 510.13L333.64 510.24L332.87 510.08L332.17 509.64L331.65 508.95L331.39 508.09L331.44 507.15L331.84 506.26L332.54 505.53L333.49 505.08L334.57 504.99L335.65 505.28L336.60 505.95L337.27 506.94L337.57 508.14L337.43 509.40L336.85 510.57L335.87 511.49L334.60 512.03L333.18 512.10" stroke="#9a9a9a" stroke-width="0.85" fill="none"/>
<path d="M333.64 522.13L333.45 522.03L333.30 521.83L333.23 521.55L333.28 521.24L333.46 520.93L333.77 520.70L334.18 520.58L334.64 520.62L335.08 520.84L335.45 521.24L335.66 521.77L335.67 522.37L335.45 522.98L335.01 523.50L334.39 523.85L333.64 523.96L332.87 523.80L332.17 523.36L331.65 522.67L331.39 521.81L331.44 520.87L331.84 519.98L332.54 519.25L333.49 518.80L334.57 518.71L335.65 519.00L336.60 519.67L337.27 520.66L337.57 521.86L337.43 523.12L336.85 524.29L335.87 525.21L334.60 525.75L333.18 525.82" stroke="#9a9a9a" stroke-width="0.85" fill="none"/>
<path d="M333.64 535.85L333.45 535.75L333.30 535.55L333.23 535.27L333.28 534.96L333.46 534.65L333.77 534.42L334.18 534.30L334.64 534.34L335.08 534.56L335.45 534.96L335.66 535.49L335.67 536.09L335.45 536.70L335.01 537.22L334.39 537.57L333.64 537.68L332.87 537.52L332.17 537.08L331.65 536.39L331.39 535.53L331.44 534.59L331.84 533.70L332.54 532.97L333.49 532.52L334.57 532.43L335.65 532.72L336.60 533.39L337.27 534.38L337.57 535.58L337.43 536.84L336.85 538.01L335.87 538.93L334.60 539.47L333.18 539.54" stroke="#9a9a9a" stroke-width="0.85" fill="none"/>
<path d="M418.2 412.8L418.2 418.2L416 418.2A2.7 2.7 0 0 1 416 412.8Z" fill="#3d8be4"/><path d="M1017 412.8L1017 418.2L1019.2 418.2A2.7 2.7 0 0 0 1019.2 412.8Z" fill="#3d8be4"/>
<path d="M418.2 434.6L418.2 444L416.6 444A2.4 2.4 0 0 1 414.2 441.6L414.2 437A2.4 2.4 0 0 1 416.6 434.6Z" fill="#3d8be4"/><path d="M1017 434.6L1017 444L1018.6 444A2.4 2.4 0 0 0 1021 441.6L1021 437A2.4 2.4 0 0 0 1018.6 434.6Z" fill="#3d8be4"/>
<path d="M1022.6 452.4L1024 451L1024 453.8Z" fill="#b0b0b0"/>
<path d="M414 423L422.6 423L422.6 427L418.3 432L414 427Z" fill="#3d8be4"/>
<path d="M416.4 504.88L420.6 504.88M416.4 513.88L420.6 513.88" stroke="#b4bccb" stroke-width="1.4"/><path d="M418.5 504.88L418.5 513.88" stroke="#b4bccb" stroke-width="1.6"/>
<path d="M416.4 518.6L420.6 518.6M416.4 527.6L420.6 527.6" stroke="#b4bccb" stroke-width="1.4"/><path d="M418.5 518.6L418.5 527.6" stroke="#b4bccb" stroke-width="1.6"/>
<path d="M416.4 532.32L420.6 532.32M416.4 541.32L420.6 541.32" stroke="#b4bccb" stroke-width="1.4"/><path d="M418.5 532.32L418.5 541.32" stroke="#b4bccb" stroke-width="1.6"/>
<path d="M416.4 546.0400000000001L420.6 546.0400000000001M416.4 555.0400000000001L420.6 555.0400000000001" stroke="#b4bccb" stroke-width="1.4"/><path d="M418.5 546.0400000000001L418.5 555.0400000000001" stroke="#b4bccb" stroke-width="1.6"/>
<path d="M416.4 559.7600000000001L420.6 559.7600000000001M416.4 568.7600000000001L420.6 568.7600000000001" stroke="#b4bccb" stroke-width="1.4"/><path d="M418.5 559.7600000000001L418.5 568.7600000000001" stroke="#b4bccb" stroke-width="1.6"/>
<path d="M5 575L9 575L11 577L11 582L5 582Z" fill="none" stroke="#3d8be4" stroke-width="1.1"/><rect x="7" y="578" width="5" height="4" fill="#3d8be4"/>
<circle cx="21" cy="578" r="3" fill="none" stroke="#b0b0b0" stroke-width="1"/><circle cx="24" cy="580.4" r="2.4" fill="none" stroke="#b0b0b0" stroke-width="1"/>
<path d="M33.4 575L33.4 582M37.6 575L37.6 582M31 577L40 577M31 580.6L40 580.6" stroke="#b0b0b0" stroke-width="1.1"/>
<circle cx="48" cy="577.4" r="2.2" fill="#b0b0b0"/><path d="M44.6 582C44.6 579 51.4 579 51.4 582Z" fill="#b0b0b0"/><path d="M51 576L54 578L51 580" fill="#b0b0b0"/>
<text x="61.4" y="581.4" font-size="8.6" fill="#b0b0b0" textLength="87.3">フレームレンダリング時間</text>
<path d="M417 580.4L420 577.2L421.4 578.6L422.2 577.8L424 580.4Z" fill="#b0b0b0"/>
<circle cx="434.8" cy="579" r="2.6" fill="#1f1f1f" stroke="#c8c8c8" stroke-width="1"/>
<path d="M475.6 580.6L479.4 576.4L480.6 577.8L482.6 575.2L486.4 580.6Z" fill="#b0b0b0"/>
</svg>
<div class="app">
<div style="left:141px;top:430.6px;width:167.6px;height:149px;background:#ececec;border-radius:5.5px;box-shadow:0 3px 10px rgba(0,0,0,0.45),0 0 0 0.5px rgba(0,0,0,0.35);"></div>
<div style="left:152px;top:466.6px;width:146px;height:1px;background:#d4d4d4;"></div>
<div style="left:144.8px;top:474px;width:160.4px;height:15.8px;background:#2563d9;border-radius:3.4px;"></div>
<div style="left:152px;top:497px;width:146px;height:1px;background:#d4d4d4;"></div>
<div style="left:152px;top:533px;width:146px;height:1px;background:#d4d4d4;"></div>
<div style="left:152px;top:556.8px;width:146px;height:1px;background:#d4d4d4;"></div>
<span style="left:292px;top:501.5px;font-size:9px;line-height:9px;color:#a8a8a8;">G</span>
<span style="left:292px;top:517.4px;font-size:9px;line-height:9px;color:#a8a8a8;">G</span>
<span style="left:292.6px;top:565.1px;font-size:9px;line-height:9px;color:#b6b6b6;">T</span>
</div>
<svg class="ov" width="1024" height="582" viewBox="0 0 1024 582">
<text x="151.2" y="446" font-size="8.8" fill="#b6b6b6" textLength="40.8">ロトベジェ</text>
<text x="151.2" y="461.7" font-size="8.8" fill="#b6b6b6" textLength="49.7">クローズパス</text>
<text x="151.2" y="485.4" font-size="8.8" font-weight="500" fill="#ffffff" textLength="67.9">ベジェパスに変換</text>
<text x="151.2" y="509.2" font-size="8.8" font-weight="500" fill="#262626" textLength="85.8">シェイプをグループ化</text>
<text x="151.2" y="525.1" font-size="8.8" font-weight="500" fill="#262626" textLength="94.2">シェイプのグループ解除</text>
<text x="151.2" y="549.2" font-size="8.8" fill="#b6b6b6" textLength="67.7">最初の頂点を設定</text>
<text x="151.2" y="572.8" font-size="8.8" fill="#b6b6b6" textLength="102.3">トランスフォームボックス</text>
<path d="M285.1 504.5L287.5 504.5L287.5 506.9L285.1 506.9ZM285.1 504.5A1.05 1.05 0 1 0 285.09000000000003 504.51M287.5 504.5" fill="none" stroke="#a8a8a8" stroke-width="0.9"/><circle cx="284.05" cy="503.45" r="1.05" fill="none" stroke="#a8a8a8" stroke-width="0.9"/><circle cx="288.55" cy="503.45" r="1.05" fill="none" stroke="#a8a8a8" stroke-width="0.9"/><circle cx="284.05" cy="507.95" r="1.05" fill="none" stroke="#a8a8a8" stroke-width="0.9"/><circle cx="288.55" cy="507.95" r="1.05" fill="none" stroke="#a8a8a8" stroke-width="0.9"/>
<text x="271.6" y="525.1" font-size="8.8" font-weight="500" fill="#a8a8a8" style="font-family:'Liberation Sans','Noto Sans CJK JP','DejaVu Sans',sans-serif">⇧</text>
<path d="M285.1 520.4L287.5 520.4L287.5 522.8L285.1 522.8ZM285.1 520.4A1.05 1.05 0 1 0 285.09000000000003 520.41M287.5 520.4" fill="none" stroke="#a8a8a8" stroke-width="0.9"/><circle cx="284.05" cy="519.35" r="1.05" fill="none" stroke="#a8a8a8" stroke-width="0.9"/><circle cx="288.55" cy="519.35" r="1.05" fill="none" stroke="#a8a8a8" stroke-width="0.9"/><circle cx="284.05" cy="523.85" r="1.05" fill="none" stroke="#a8a8a8" stroke-width="0.9"/><circle cx="288.55" cy="523.85" r="1.05" fill="none" stroke="#a8a8a8" stroke-width="0.9"/>
<path d="M285.1 568.1L287.5 568.1L287.5 570.5L285.1 570.5ZM285.1 568.1A1.05 1.05 0 1 0 285.09000000000003 568.11M287.5 568.1" fill="none" stroke="#b6b6b6" stroke-width="0.9"/><circle cx="284.05" cy="567.05" r="1.05" fill="none" stroke="#b6b6b6" stroke-width="0.9"/><circle cx="288.55" cy="567.05" r="1.05" fill="none" stroke="#b6b6b6" stroke-width="0.9"/><circle cx="284.05" cy="571.55" r="1.05" fill="none" stroke="#b6b6b6" stroke-width="0.9"/><circle cx="288.55" cy="571.55" r="1.05" fill="none" stroke="#b6b6b6" stroke-width="0.9"/>
</svg>
<div class="app">
<div style="left:180px;top:10px;width:32.2px;height:28.4px;background:transparent;border:5.6px solid #e94226;"></div>
<div style="left:186.8px;top:38.9px;width:358px;height:23.9px;background:#000;"></div>
<div style="left:133.3px;top:465.8px;width:188.2px;height:33.2px;background:transparent;border:6.4px solid #e94226;border-top-width:6px;border-bottom-width:5.4px;"></div>
<div style="left:329.1px;top:459.2px;width:366.6px;height:46.5px;background:#000;"></div>
</div>
<svg class="ov" width="1024" height="582" viewBox="0 0 1024 582">
<text x="185.95" y="56.9" font-size="16.3" font-weight="700" fill="#fff" style="font-family:'Noto Sans CJK JP','DejaVu Sans',sans-serif">↑</text>
<text x="201.4" y="58.3" font-size="19.3" font-weight="500" fill="#fff">①</text>
<text x="222.5" y="58.2" font-size="18.9" font-weight="700" fill="#fff" textLength="321.3">長方形ツールをダブルクリックで作成</text>
<text x="330.5" y="477.7" font-size="16.3" font-weight="700" fill="#fff" style="font-family:'Noto Sans CJK JP','DejaVu Sans',sans-serif">←</text>
<text x="347.9" y="478.8" font-size="20.5" font-weight="500" fill="#fff">②</text>
<text x="368.1" y="478.5" font-size="19.1" font-weight="700" fill="#fff" textLength="229.2">長方形パス上で右クリック</text>
<text x="348.6" y="501.7" font-size="19.1" font-weight="700" fill="#fff" textLength="343.8">その後「ベジェパスに変換」をクリック</text>
</svg>
</body></html>
